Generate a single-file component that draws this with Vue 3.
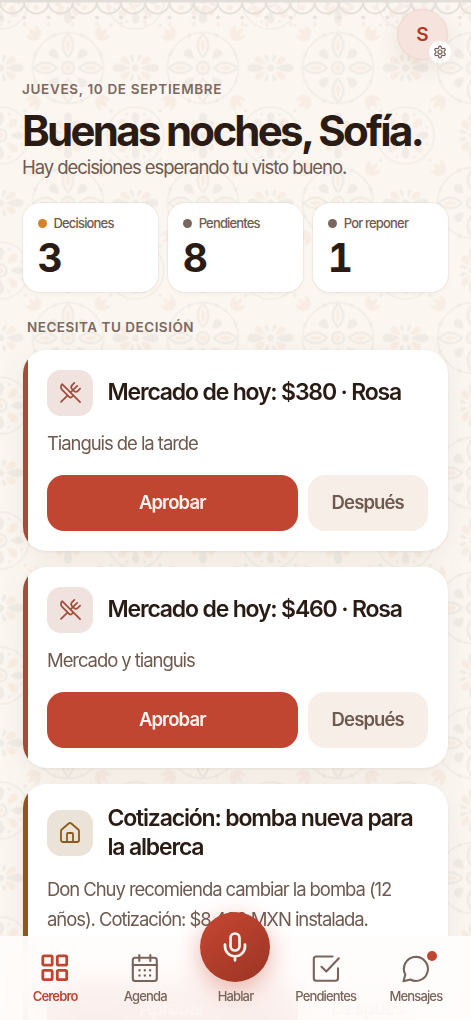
<script setup>
const stats = [
  { label: 'Decisiones', value: 3, tone: 'amber' },
  { label: 'Pendientes', value: 8, tone: 'taupe' },
  { label: 'Por reponer', value: 1, tone: 'taupe' },
]

const decisions = [
  { id: 1, kind: 'food', title: 'Mercado de hoy: $380 · Rosa', note: 'Tianguis de la tarde' },
  { id: 2, kind: 'food', title: 'Mercado de hoy: $460 · Rosa', note: 'Mercado y tianguis' },
  {
    id: 3,
    kind: 'home',
    title: 'Cotización: bomba nueva para la alberca',
    note: 'Don Chuy recomienda cambiar la bomba (12 años). Cotización: $8,400 MXN instalada.',
  },
]

const quarter = [0, 90, 180, 270]
const diagonal = [45, 135, 225, 315]
const eighth = [...quarter, ...diagonal]
const corners = [[0, 0], [135, 0], [0, 135], [135, 135]]
const sides = [[0, 67.5, 90], [135, 67.5, 90], [67.5, 0, 0], [67.5, 135, 0]]
</script>

<template>
  <div class="screen">
    <svg class="backdrop" width="471" height="1020" aria-hidden="true">
      <defs>
        <pattern id="tile" width="135" height="135" patternUnits="userSpaceOnUse" patternTransform="translate(0.5 0.5)">
          <g transform="translate(67.5 67.5)">
            <circle r="35.5" class="line" />
            <circle r="6" class="line thick" />
            <circle r="3.2" class="peach" />
            <g v-for="a in quarter" :key="'p' + a" :transform="`rotate(${a})`">
              <path d="M0-11C-7-18-7-27 0-34C7-27 7-18 0-11Z" class="line thick" />
              <path d="M0-16C-3-20-3-25 0-29C3-25 3-20 0-16Z" class="peach" />
            </g>
            <g v-for="a in diagonal" :key="'d' + a" :transform="`rotate(${a})`">
              <path d="M0-13C-6-20-5.5-25 0-25C5.5-25 6-20 0-13Z" class="gray" />
            </g>
            <g v-for="a in [22.5, 67.5, 112.5, 157.5, 202.5, 247.5, 292.5, 337.5]" :key="'r' + a" :transform="`rotate(${a})`">
              <circle cy="-35.5" r="1.9" class="gray" />
            </g>
            <g v-for="a in diagonal" :key="'t' + a" :transform="`rotate(${a})`">
              <path d="M0-41C-7-42-9-48-7-54L-3-49L0-57L3-49L7-54C9-48 7-42 0-41Z" class="peach" />
            </g>
          </g>
          <g v-for="(c, i) in corners" :key="'c' + i" :transform="`translate(${c[0]} ${c[1]})`">
            <circle r="28.5" class="line" />
            <circle r="6" class="line thick" />
            <circle r="3" class="peach" />
            <g v-for="a in eighth" :key="a" :transform="`rotate(${a})`">
              <path d="M0-10C-5-16-5-22 0-23C5-22 5-16 0-10Z" :class="a % 90 ? 'peach' : 'gray'" />
              <circle v-if="a % 90" cy="-35" r="1.6" class="gray" />
            </g>
            <g v-for="a in eighth" :key="'o' + a" :transform="`rotate(${a + 22.5})`">
              <circle cy="-23" r="1.4" class="gray" />
            </g>
          </g>
          <g v-for="(s, i) in sides" :key="'s' + i" :transform="`translate(${s[0]} ${s[1]}) rotate(${s[2]})`">
            <circle r="3.5" class="gray" />
            <path v-for="a in [0, 180]" :key="a" :transform="`rotate(${a})`" d="M0-5C-6-15-5-23 0-23C5-23 6-15 0-5Z" class="gray" />
            <path v-for="a in [35, 145, 215, 325]" :key="a" :transform="`rotate(${a})`" d="M0-6C-5-13-4-18 0-18C4-18 5-13 0-6Z" class="peach" />
            <path v-for="a in [70, 110, 250, 290]" :key="a" :transform="`rotate(${a})`" d="M0-6C-2.5-10-2-14 0-14C2-14 2.5-10 0-6Z" class="gray" />
          </g>
        </pattern>
        <pattern id="lace" width="24.2" height="30" patternUnits="userSpaceOnUse">
          <path d="M0 2A12.1 11.5 0 0 0 24.2 2" class="scallop" />
          <circle cx="12.1" cy="7.5" r="2.8" class="peach" />
          <circle cx="0.5" cy="17.5" r="1.7" class="drop" />
          <circle cx="24" cy="17.5" r="1.7" class="drop" />
          <path d="M0.5 20.5l2 4a2 2 0 0 1-4 0zM24.5 20.5l2 4a2 2 0 0 1-4 0z" class="peach" />
        </pattern>
      </defs>
      <rect width="471" height="1020" fill="url(#tile)" />
      <rect width="471" height="30" fill="url(#lace)" />
      <rect width="471" height="2.5" class="band" />
    </svg>

    <button class="profile">
      S
      <span class="gear">
        <svg width="14" height="14" viewBox="0 0 24 24">
          <path d="M12.22 2h-.44a2 2 0 0 0-2 2v.18a2 2 0 0 1-1 1.73l-.43.25a2 2 0 0 1-2 0l-.15-.08a2 2 0 0 0-2.73.73l-.22.38a2 2 0 0 0 .73 2.73l.15.1a2 2 0 0 1 1 1.72v.51a2 2 0 0 1-1 1.74l-.15.09a2 2 0 0 0-.73 2.73l.22.38a2 2 0 0 0 2.73.73l.15-.08a2 2 0 0 1 2 0l.43.25a2 2 0 0 1 1 1.73V20a2 2 0 0 0 2 2h.44a2 2 0 0 0 2-2v-.18a2 2 0 0 1 1-1.73l.43-.25a2 2 0 0 1 2 0l.15.08a2 2 0 0 0 2.73-.73l.22-.39a2 2 0 0 0-.73-2.73l-.15-.08a2 2 0 0 1-1-1.74v-.5a2 2 0 0 1 1-1.74l.15-.09a2 2 0 0 0 .73-2.73l-.22-.38a2 2 0 0 0-2.73-.73l-.15.08a2 2 0 0 1-2 0l-.43-.25a2 2 0 0 1-1-1.73V4a2 2 0 0 0-2-2z" />
          <circle cx="12" cy="12" r="3.5" />
        </svg>
      </span>
    </button>

    <main>
      <header>
        <p class="date">JUEVES, 10 DE SEPTIEMBRE</p>
        <h1>Buenas noches, Sofía.</h1>
        <p class="lead">Hay decisiones esperando tu visto bueno.</p>
      </header>

      <section class="stats">
        <div v-for="s in stats" :key="s.label" class="stat">
          <div class="stat-label"><i :class="s.tone"></i>{{ s.label }}</div>
          <strong>{{ s.value }}</strong>
        </div>
      </section>

      <h2>NECESITA TU DECISIÓN</h2>

      <section class="list">
        <article v-for="d in decisions" :key="d.id" :class="['card', d.kind]">
          <div class="card-head">
            <span class="tile-icon">
              <svg v-if="d.kind === 'food'" width="23" height="23" viewBox="0 0 24 24">
                <path d="m16 2-2.3 2.3a3 3 0 0 0 0 4.2l1.8 1.8a3 3 0 0 0 4.2 0L22 8" />
                <path d="M15 15 3.3 3.3a4.2 4.2 0 0 0 0 6l7.3 7.3c.7.7 2 .7 2.8 0L15 15Zm0 0 7 7" />
                <path d="m2.1 21.8 6.4-6.3M19 5l-7 7" />
              </svg>
              <svg v-else width="24" height="24" viewBox="0 0 24 24">
                <path d="M15 21v-8a1 1 0 0 0-1-1h-4a1 1 0 0 0-1 1v8" />
                <path d="M3 10a2 2 0 0 1 .709-1.528l7-5.999a2 2 0 0 1 2.582 0l7 5.999A2 2 0 0 1 21 10v9a2 2 0 0 1-2 2H5a2 2 0 0 1-2-2z" />
              </svg>
            </span>
            <h3>{{ d.title }}</h3>
          </div>
          <p class="note">{{ d.note }}</p>
          <div class="actions">
            <button class="approve">Aprobar</button>
            <button class="later">Después</button>
          </div>
        </article>
      </section>
    </main>

    <nav>
      <a class="active">
        <svg width="30" height="30" viewBox="0 0 30 30">
          <g class="grid-icon">
            <rect x="2.8" y="2.8" width="9.4" height="9.4" rx="1.2" />
            <rect x="17.3" y="2.8" width="9.4" height="9.4" rx="1.2" />
            <rect x="2.8" y="17.3" width="9.4" height="9.4" rx="1.2" />
            <rect x="17.3" y="17.3" width="9.4" height="9.4" rx="1.2" />
          </g>
        </svg>
        <span>Cerebro</span>
      </a>
      <a>
        <svg width="30" height="30" viewBox="0 0 30 30">
          <rect x="2.8" y="4.8" width="24" height="23.2" rx="2.5" />
          <path d="M2.8 12h24M9.3 2v6M20.3 2v6" />
          <g class="dots">
            <path d="M9.5 17.3h.01M14.8 17.3h.01M20.1 17.3h.01M9.5 22.5h.01M14.8 22.5h.01M20.1 22.5h.01" />
          </g>
        </svg>
        <span>Agenda</span>
      </a>
      <a>
        <div class="mic">
          <svg width="32" height="32" viewBox="0 0 32 32">
            <rect x="11.5" y="2.5" width="9" height="17" rx="4.5" />
            <path d="M6 13.5v1.8a10 10 0 0 0 20 0v-1.8M16 25.3v4" />
          </svg>
        </div>
        <span>Hablar</span>
      </a>
      <a>
        <svg width="30" height="30" viewBox="0 0 30 30">
          <path d="M21.5 3.5H5.3A2.5 2.5 0 0 0 2.8 6v19.3a2.5 2.5 0 0 0 2.5 2.5h19.2a2.5 2.5 0 0 0 2.5-2.5V15.2" />
          <path d="m10.5 13.8 4.800 4.700L27.900 5.300" />
        </svg>
        <span>Pendientes</span>
      </a>
      <a>
        <svg width="30" height="30" viewBox="0 0 30 30">
          <path d="M2.5 28.3 4.3 21.5A12 12 0 1 1 9.3 26.500L2.500 28.300Z" />
        </svg>
        <b class="unread"></b>
        <span>Mensajes</span>
      </a>
    </nav>
  </div>
</template>

<style>
body { margin: 0; }
</style>

<style scoped>
* { box-sizing: border-box; }
p, h1, h2, h3 { margin: 0; }
button { border: 0; font: inherit; letter-spacing: inherit; padding: 0; }

.screen {
  position: relative;
  width: 471px;
  height: 1020px;
  overflow: hidden;
  background: #fbf6f0;
  color: #2a1b15;
  font-family: Inter, "Liberation Sans", sans-serif;
}

.backdrop { position: absolute; inset: 0; }
.line { fill: none; stroke: #f0ebe5; stroke-width: 1.4; }
.thick { stroke-width: 2.4; }
.gray { fill: #f0ebe5; }
.peach { fill: #f8ede4; }
.scallop { fill: none; stroke: #e5dfda; stroke-width: 1.8; }
.drop { fill: #e8e2dc; }
.band { fill: #e3ddd8; }

.profile {
  position: absolute;
  z-index: 2;
  top: 9px;
  left: 397px;
  width: 51px;
  height: 51px;
  border-radius: 50%;
  border: 1px solid #eed6d0;
  background: #f6e3de;
  color: #b23a26;
  font-size: 19px;
  font-weight: 600;
  box-shadow: 0 8px 22px rgba(90, 50, 30, .1);
}
.gear {
  position: absolute;
  left: 31px;
  top: 31px;
  width: 22px;
  height: 22px;
  border-radius: 50%;
  background: #fff;
  display: grid;
  place-items: center;
}
.gear svg { fill: none; stroke: #6f5a50; stroke-width: 2; }

main { position: relative; padding: 80px 23px 0; }
header { margin-left: -1px; }
.date { font-size: 13.5px; line-height: 18px; font-weight: 600; letter-spacing: .66px; color: #7d695f; }
h1 { margin-top: 8px; font-size: 42px; line-height: 50px; font-weight: 700; letter-spacing: -2.72px; white-space: nowrap; }
.lead { margin-top: -1px; font-size: 18.5px; line-height: 24px; letter-spacing: -1.06px; color: #6f5a50; }

.stats { display: grid; grid-template-columns: repeat(3, 1fr); gap: 10.5px; margin-top: 24px; }
.stat {
  height: 89px;
  padding: 12px 14px 0;
  border-radius: 17px;
  background: #fff;
  box-shadow: 0 0 0 1px rgba(90, 60, 40, .05), 0 2px 4px rgba(90, 60, 40, .04);
}
.stat-label { display: flex; align-items: center; gap: 7px; font-size: 13px; line-height: 17px; font-weight: 500; letter-spacing: -.83px; color: #6f5a50; white-space: nowrap; }
.stat-label i { width: 9px; height: 9px; border-radius: 50%; margin-left: .5px; }
.amber { background: #d58127; }
.taupe { background: #7a665c; }
.stat strong { display: block; margin: 2px 0 0 .5px; font-size: 39px; line-height: 47px; font-weight: 700; letter-spacing: -1px; font-variant-numeric: tabular-nums; }

h2 { margin: 26px 0 0 4px; font-size: 13.5px; line-height: 18px; font-weight: 600; letter-spacing: .5px; color: #7d695f; }

.list {
  display: grid;
  gap: 16.5px;
  margin-top: 14px;
  filter: drop-shadow(0 1px 1px rgba(80, 50, 35, .07)) drop-shadow(0 6px 13px rgba(80, 50, 35, .07));
}
.card {
  --accent: #a34c3a;
  --tint: #f0e2df;
  position: relative;
  padding: 19.5px 20px 20px 24px;
  border-radius: 24px;
  background: #fff;
  overflow: hidden;
}
.card::before { content: ""; position: absolute; inset: 0 auto 0 0; width: 5px; background: var(--accent); }
.card.home { --accent: #8c5a18; --tint: #ebe3d8; }
.card-head { display: flex; align-items: center; gap: 14.5px; min-height: 46px; }
.tile-icon { flex: none; width: 46px; height: 46px; border-radius: 14px; background: var(--tint); display: grid; place-items: center; }
.tile-icon svg { fill: none; stroke: var(--accent); stroke-width: 1.8; stroke-linecap: round; stroke-linejoin: round; }
h3 { font-size: 23px; line-height: 29px; font-weight: 600; letter-spacing: -1.18px; }
.note { margin-top: 12px; font-size: 18.5px; line-height: 30px; letter-spacing: -1.07px; color: #6f5a50; }
.home .note { min-height: 90px; }
.actions { display: flex; gap: 10px; margin-top: 17px; height: 56px; font-size: 18.5px; font-weight: 600; letter-spacing: -.88px; }
.actions button { padding-bottom: 1px; }
.approve { flex: 1; border-radius: 17px; background: #c14631; color: #fff3ef; }
.later { width: 120.5px; border-radius: 17px; background: #f7eee8; color: #6f5a50; }

nav {
  position: absolute;
  inset: 936px 0 0 0;
  display: grid;
  grid-template-columns: repeat(5, 1fr);
  padding: 0 10px;
  color: #78645a;
}
nav::before { content: ""; position: absolute; inset: 0; background: rgba(255, 253, 252, .92); backdrop-filter: blur(16px); }
nav a { position: relative; display: flex; flex-direction: column; align-items: center; padding-top: 17px; font-size: 13px; line-height: 16px; font-weight: 500; letter-spacing: -.85px; }
nav span { margin-top: 5px; }
nav svg { fill: none; stroke: currentColor; stroke-width: 2.1; stroke-linecap: round; stroke-linejoin: round; }
.grid-icon { stroke-width: 2.8; }
.dots { stroke-width: 2.4; }
.active { color: #c14631; }
.active span { font-weight: 600; }
.mic {
  width: 70px;
  height: 70px;
  margin: -41px 0 1px;
  border-radius: 50%;
  background: linear-gradient(145deg, #c64732, #9b3424);
  color: #fff4ef;
  display: grid;
  place-items: center;
  box-shadow: 0 7px 25px rgba(200, 60, 40, .38);
}
.mic svg { stroke-width: 2.7; }
.mic + span { margin-top: 5px; }
.unread { position: absolute; top: 14.5px; left: 56px; width: 10px; height: 10px; border-radius: 50%; background: #c14631; }
</style>
